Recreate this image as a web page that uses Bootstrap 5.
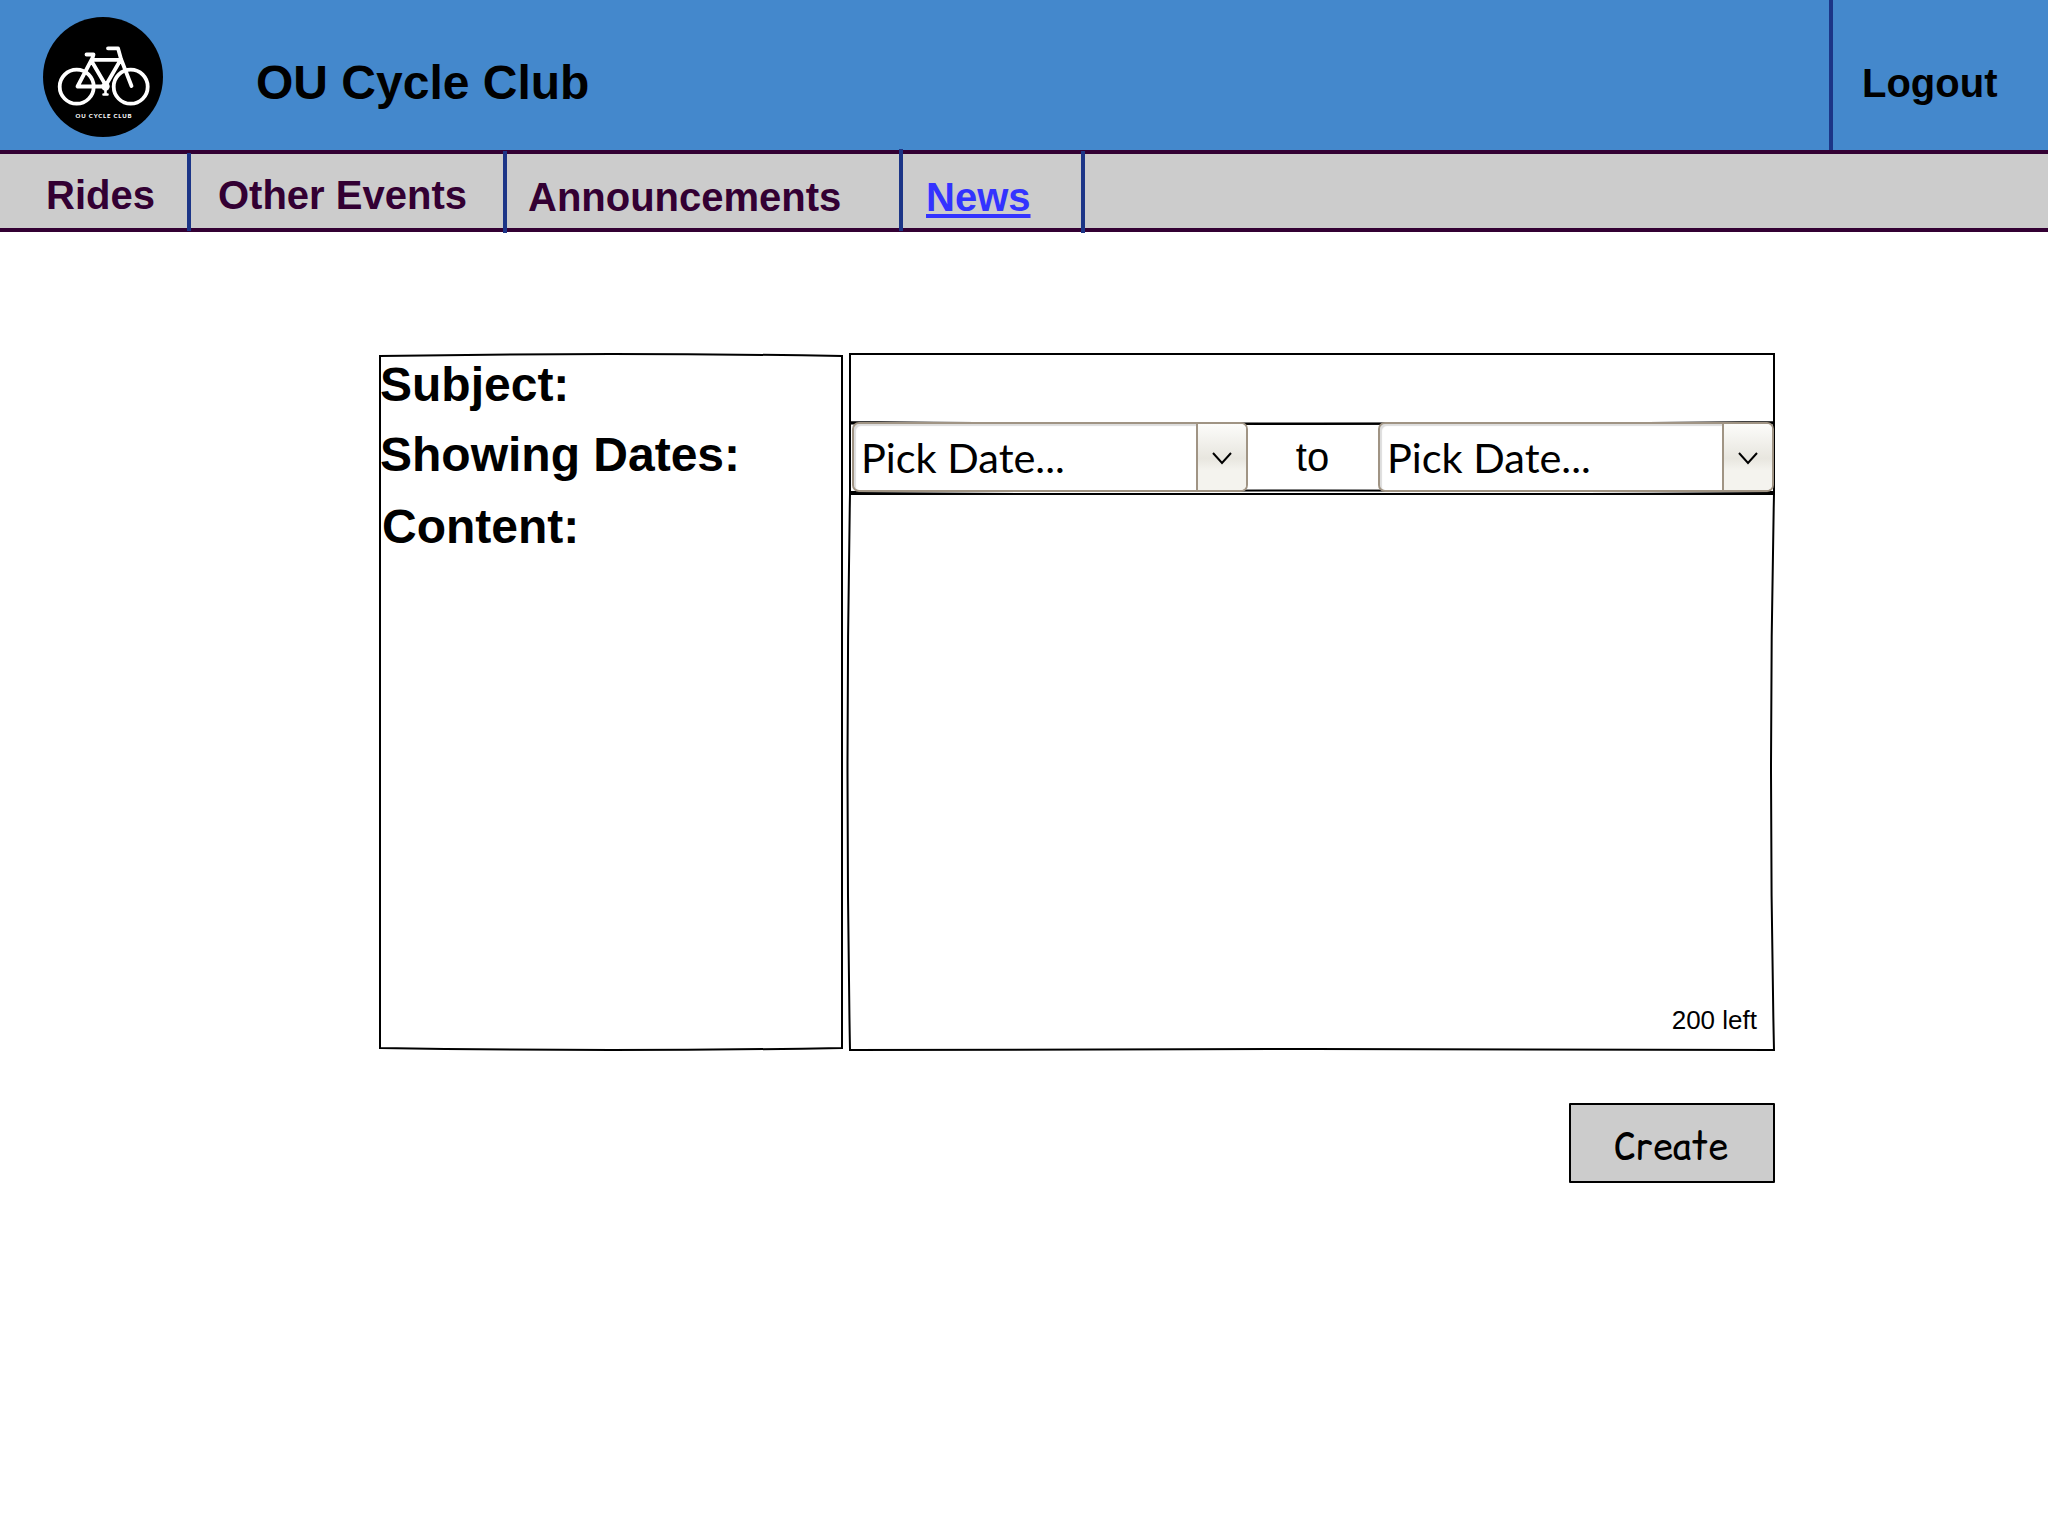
<!DOCTYPE html>
<html lang="en">
<head>
<meta charset="utf-8">
<meta name="viewport" content="width=device-width, initial-scale=1">
<title>OU Cycle Club</title>
<link href="https://cdn.jsdelivr.net/npm/bootstrap@5.3.0/dist/css/bootstrap.min.css" rel="stylesheet">
<style>
body{font-family:"Liberation Sans",Arial,sans-serif;color:#000;background:#fff;min-height:1536px;overflow-x:hidden}
.top-bar{height:150px;background:#48c;padding:0 0 0 43px}
.logo{width:120px;height:120px;margin:17px 93px 0 0}
.club-name{font-size:48px;line-height:56px;font-weight:700;padding-top:55px}
.logout{width:219px;border-left:4px solid #1c3587;font-size:40px;line-height:46px;font-weight:700;color:#000;padding:60px 0 0 29px;text-decoration:none}
.tabs{height:82px;background:#ccc;border-top:4px solid #303;border-bottom:4px solid #303}
.tabs .tab-cell{position:relative;color:#303;font-size:40px;line-height:46px;font-weight:700;padding:18px 0 0}
.tabs .tab-cell::after{content:"";position:absolute;right:0;top:-3px;width:4px;height:82px;background:#1c3587}
.tabs .t1{width:191px;padding-left:46px}.tabs .t1::after{top:-1px;height:78px}
.tabs .t2{width:316px;padding-left:27px}
.tabs .t3{width:396px;padding:20px 0 0 21px}.tabs .t3::after{top:-5px}
.tabs .t4{width:182px;padding:20px 0 0 23px;color:#33f}
.t4 span{text-decoration:underline;text-decoration-thickness:4px;text-underline-offset:3px;text-decoration-skip-ink:none}
.news-form{width:1396px;margin:121px 0 0 379px}
.outlined{position:relative}
.outline-art{position:absolute;inset:0;width:100%;height:100%;overflow:visible;fill:none;stroke:#000;stroke-width:2;pointer-events:none}
.label-col{width:464px;height:698px;margin-right:6px;font-size:48px;line-height:56px;font-weight:700}
.label-col label{display:block;padding-left:1px}
.label-col .l1{padding-top:4px}.label-col .l2{padding-top:14px}.label-col .l3{padding:16px 0 0 3px}
.entry-col{width:926px;height:698px}
.subject{height:69px}
.subject input,.body-field textarea{width:100%;height:100%;border:0;background:transparent;resize:none;outline:0;box-shadow:none;padding:8px}
.dates{height:70px;padding-left:3px}
.date-box{position:relative;z-index:1;width:396px;height:70px;border:2px solid #a09484;border-radius:7px;background:#fff;box-shadow:inset 2px 2px 1px #ddd;overflow:hidden}
.date-value{font-family:Lato,Carlito,sans-serif;font-size:41.5px;line-height:50px;padding:8px 0 0 7px;white-space:nowrap}
.date-arrow{width:50px;border-left:2px solid #a09484;background:linear-gradient(#fcfcfa 0,#e8e6df 52%,#f4f3ee 70%,#f4f3ee 100%)}
.date-arrow svg{width:20px;height:14px;margin-top:2px;fill:none;stroke:#000;stroke-width:2}
.sep{width:130px;font-size:40px;line-height:46px;padding:12px 1px 0 0;text-align:center}
.body-field{height:559px}
.left-count{position:absolute;right:18px;bottom:16px;font-size:26px;line-height:30px}
.create{width:206px;height:80px;margin-top:52px;border:2px solid #000;background:#ccc;border-radius:1px;font-family:"Comic Relief","Comic Sans MS",sans-serif;font-size:36px;line-height:46px;color:#000;padding:6px 2px 0 0}
</style>
</head>
<body>
<header class="top-bar d-flex align-items-start">
<svg class="logo flex-shrink-0" viewBox="0 0 120 120" role="img" aria-label="OU Cycle Club logo">
<circle cx="60" cy="60" r="60"/>
<g fill="none" stroke="#fff" stroke-width="3.8" stroke-linecap="round" stroke-linejoin="round">
<circle cx="33.7" cy="69.7" r="17"/><circle cx="87.7" cy="69.7" r="17"/>
<path d="M43.500 37.500h7l-1 3.500-15 28.500H62M48.500 44L62 67M50 42.800h27.500M77.500 43L63 68M65 31.300H75L78 42L88.500 69"/>
<path stroke-width="2.600" d="M62.500 70v7M60.500 77.500h4"/></g><circle cx="62.500" cy="69.500" r="4.200" fill="#fff"/>
<text x="60.500" y="100.500" text-anchor="middle" fill="#fff" font-family="Lato,sans-serif" font-size="6" font-weight="900" textLength="56">OU CYCLE CLUB</text>
</svg>
<div class="club-name">OU Cycle Club</div>
<a class="logout ms-auto h-100" href="#">Logout</a>
</header>
<nav class="tabs d-flex">
<a class="tab-cell t1 text-decoration-none" href="#">Rides</a>
<a class="tab-cell t2 text-decoration-none" href="#">Other Events</a>
<a class="tab-cell t3 text-decoration-none" href="#">Announcements</a>
<a class="tab-cell t4 text-decoration-none" href="#"><span>News</span></a>
</nav>
<form class="news-form d-flex flex-column">
<div class="d-flex">
<div class="label-col outlined">
<svg class="outline-art" viewBox="0 0 464 698"><path d="M1 3Q232 -1 463 3V695Q232 699 1 695Z"/></svg>
<label class="l1">Subject:</label><label class="l2">Showing Dates:</label><label class="l3">Content:</label>
</div>
<div class="entry-col">
<div class="subject outlined"><svg class="outline-art" viewBox="0 0 926 69"><path d="M1 1H925V69Q463 73 1 69Z"/></svg><input type="text" aria-label="Subject"></div>
<div class="dates outlined d-flex"><svg class="outline-art" viewBox="0 0 926 70"><path d="M1 1.500H925V70Q463 67 1 70Z"/></svg>
<div class="date-box d-flex"><div class="date-value flex-grow-1">Pick Date...</div><div class="date-arrow d-flex align-items-center justify-content-center"><svg viewBox="0 0 20 14"><path d="M1 2l9 10 9-10"/></svg></div></div>
<div class="sep">to</div>
<div class="date-box d-flex"><div class="date-value flex-grow-1">Pick Date...</div><div class="date-arrow d-flex align-items-center justify-content-center"><svg viewBox="0 0 20 14"><path d="M1 2l9 10 9-10"/></svg></div></div>
</div>
<div class="body-field outlined"><svg class="outline-art" viewBox="0 0 926 559"><path d="M1 2H925Q919 280 925 558Q463 556 1 558Q-4 280 1 2Z"/></svg><textarea aria-label="Content"></textarea><span class="left-count">200 left</span></div>
</div>
</div>
<button class="create align-self-end" type="button">Create</button>
</form>
<script src="https://cdn.jsdelivr.net/npm/bootstrap@5.3.0/dist/js/bootstrap.bundle.min.js"></script>
</body>
</html>
